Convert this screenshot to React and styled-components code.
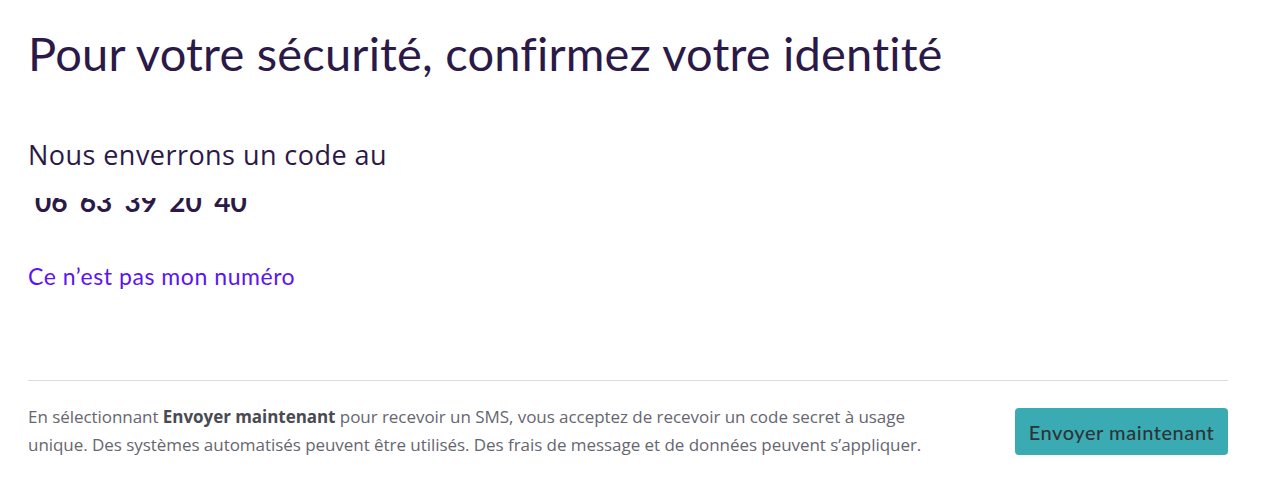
import React from "react";
import styled, { createGlobalStyle } from "styled-components";

const Global = createGlobalStyle`
  html, body { margin: 0; padding: 0; background: #fff; }
  body { font-family: Lato, "Open Sans", sans-serif; -webkit-font-smoothing: antialiased; }
`;

const Page = styled.div`
  width: 1200px;
  padding: 0 28px;
`;

const Title = styled.h1`
  margin: 0;
  padding-top: 23px;
  font-family: Lato, sans-serif;
  font-size: 47px;
  font-weight: 400;
  line-height: 60px;
  color: #2b1a47;
  letter-spacing: 0.2px;
`;

const Lead = styled.p`
  margin: 54px 0 0;
  font-family: "Open Sans", sans-serif;
  font-size: 27px;
  line-height: 36px;
  color: #2b1a47;
  letter-spacing: 0.45px;
`;

const Clip = styled.div`
  height: 15px;
  overflow: hidden;
  margin-top: 25px;
  padding-left: 7px;
`;

const Phone = styled.div`
  margin-top: -11px;
  font-family: Lato, sans-serif;
  font-size: 28px;
  line-height: 28px;
  font-weight: 700;
  color: #2b1a47;
  word-spacing: 5.5px;
`;

const Link = styled.a`
  display: block;
  width: fit-content;
  margin-top: 49px;
  font-family: Lato, sans-serif;
  font-size: 23px;
  line-height: 28px;
  color: #5b14f5;
  letter-spacing: 0.55px;
  text-decoration: none;
  cursor: pointer;
`;

const Footer = styled.div`
  margin-top: 90px;
  border-top: 1px solid #dcdcdc;
  padding-top: 22px;
  display: flex;
  justify-content: space-between;
  align-items: flex-start;
`;

const Legal = styled.p`
  margin: 0;
  max-width: 910px;
  font-family: "Open Sans", sans-serif;
  font-size: 17px;
  line-height: 28px;
  color: #666670;
  letter-spacing: -0.05px;
  strong { font-weight: 700; color: #4a4a52; }
`;

const Button = styled.button`
  margin-top: 5px;
  width: 213px;
  height: 47px;
  flex-shrink: 0;
  border: none;
  border-radius: 4px;
  background: #3aabb2;
  color: #2e3338;
  font-family: Lato, sans-serif;
  font-size: 20px;
  font-weight: 500;
  letter-spacing: 0.55px;
  cursor: pointer;
`;

export default function App() {
  return (
    <>
      <Global />
      <Page>
        <Title>Pour votre sécurité, confirmez votre identité</Title>
        <Lead>Nous enverrons un code au</Lead>
        <Clip>
          <Phone>06 63 39 20 40</Phone>
        </Clip>
        <Link>Ce n’est pas mon numéro</Link>
        <Footer>
          <Legal>
            En sélectionnant <strong>Envoyer maintenant</strong> pour recevoir un SMS, vous acceptez de recevoir un code secret à usage unique. Des systèmes automatisés peuvent être utilisés. Des frais de message et de données peuvent s’appliquer.
          </Legal>
          <Button>Envoyer maintenant</Button>
        </Footer>
      </Page>
    </>
  );
}
